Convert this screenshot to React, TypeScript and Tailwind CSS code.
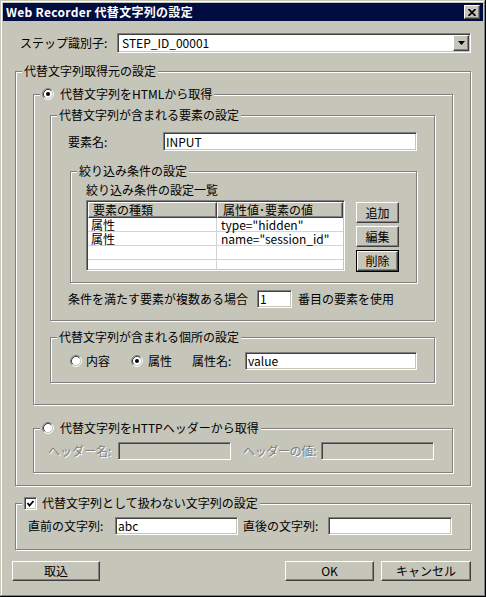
import React from 'react';

const SUNKEN =
  'border border-t-[#808080] border-l-[#808080] border-b-white border-r-white shadow-[inset_1px_1px_0_#404040,inset_-1px_-1px_0_#c6c5b9]';
const RAISED =
  'border border-t-white border-l-white border-b-[#404040] border-r-[#404040] shadow-[inset_-1px_-1px_0_#808080]';
const DISABLED = 'text-[#808080] [text-shadow:1px_1px_0_#fff]';

const Radio: React.FC<{ checked?: boolean }> = ({ checked }) => (
  <svg width="12" height="12" viewBox="0 0 12 12" className="shrink-0">
    <circle cx="6" cy="6" r="4.5" fill="#fff" />
    <path d="M9.89 2.11 A5.5 5.5 0 0 0 2.11 9.89" fill="none" stroke="#808080" />
    <path d="M2.11 9.89 A5.5 5.5 0 0 0 9.89 2.11" fill="none" stroke="#fff" />
    <path d="M9.18 2.82 A4.5 4.5 0 0 0 2.82 9.18" fill="none" stroke="#404040" />
    <path d="M2.82 9.18 A4.5 4.5 0 0 0 9.18 2.82" fill="none" stroke="#c6c5b9" />
    {checked && <circle cx="6" cy="6" r="2" fill="#000" />}
  </svg>
);

const Check: React.FC = () => (
  <div className={`w-[13px] h-[13px] bg-white shrink-0 flex items-center justify-center ${SUNKEN}`}>
    <svg width="9" height="9" viewBox="0 0 9 9">
      <polyline points="1.5,4 3.5,6.5 7.5,2" fill="none" stroke="#000" strokeWidth="1.8" />
    </svg>
  </div>
);

const Group: React.FC<{ label: React.ReactNode; className?: string; body?: string; children?: React.ReactNode }> = ({
  label,
  className = '',
  body = '',
  children,
}) => (
  <div className={`border border-[#808080] shadow-[inset_1px_1px_0_#fff,1px_1px_0_#fff] ${className}`}>
    <div className="-mt-[8px] ml-[6px] w-fit bg-[#c6c5b9] px-[2px] h-[14px] leading-[14px] flex items-center">
      {label}
    </div>
    <div className={body}>{children}</div>
  </div>
);

const Input: React.FC<{ value?: string; className?: string; disabled?: boolean }> = ({ value = '', className = '', disabled }) => (
  <div
    className={`h-[18px] p-[1px] pl-[2px] flex items-center leading-[14px] ${disabled ? 'bg-[#c6c5b9]' : 'bg-white'} ${SUNKEN} ${className}`}
  >
    {value}
  </div>
);

const Button: React.FC<{ children: React.ReactNode; className?: string }> = ({ children, className = '' }) => (
  <div className={`h-[20px] bg-[#c6c5b9] flex items-center justify-center leading-[14px] ${RAISED} ${className}`}>
    {children}
  </div>
);

const rows = [
  ['属性', 'type="hidden"'],
  ['属性', 'name="session_id"'],
  ['', ''],
  ['', ''],
];

export default function App() {
  return (
    <div className="w-[486px] h-[597px] bg-[#c6c5b9] p-[3px] text-[12px] leading-[14px] text-black [font-family:'Noto_Sans_CJK_JP','Noto_Sans',sans-serif] shadow-[inset_-1px_-1px_0_#000,inset_1px_1px_0_#c6c5b9,inset_-2px_-2px_0_#808080,inset_2px_2px_0_#fff]">
      {/* title bar */}
      <div className="h-[18px] bg-[#010c40] flex items-center justify-between pl-[3px] pr-[3px]">
        <span className="text-white font-bold tracking-[0.3px]">Web Recorder 代替文字列の設定</span>
        <div className={`w-[16px] h-[14px] bg-[#c6c5b9] flex items-center justify-center ${RAISED}`}>
          <svg width="8" height="7" viewBox="0 0 8 7">
            <path d="M0.5 0 L7.5 7 M7.5 0 L0.5 7" stroke="#000" strokeWidth="1.6" />
          </svg>
        </div>
      </div>

      <div className="px-[12px] pt-[12px]">
        {/* step id */}
        <div className="flex items-center h-[20px]">
          <span className="pl-[5px] w-[102px]">ステップ識別子:</span>
          <div className={`flex-1 h-[20px] bg-white p-[1px] flex items-center ${SUNKEN}`}>
            <span className="pl-[3px] flex-1">STEP_ID_00001</span>
            <div className={`w-[16px] h-[16px] bg-[#c6c5b9] flex items-center justify-center ${RAISED}`}>
              <svg width="7" height="4" viewBox="0 0 7 4">
                <path d="M0 0 H7 L3.5 4 Z" fill="#000" />
              </svg>
            </div>
          </div>
        </div>

        {/* source settings */}
        <Group label="代替文字列取得元の設定" className="mt-[18px]" body="px-[17px] pb-[12px]">
          <Group
            className="mt-[16px]"
            body="pl-[16px] pr-[17px] pb-[21px]"
            label={
              <span className="flex items-center gap-[6px]">
                <Radio checked />
                代替文字列をHTMLから取得
              </span>
            }
          >
            <Group label="代替文字列が含まれる要素の設定" className="mt-[14px]" body="px-[17px] pb-[12px]">
              <div className="mt-[10px] flex items-center h-[19px]">
                <span className="w-[95px]">要素名:</span>
                <Input value="INPUT" className="flex-1 h-[19px]" />
              </div>

              <Group label="絞り込み条件の設定" className="mt-[20px] ml-[2px]" body="pl-[15px] pr-[17px] pb-[10px]">
                <div className="mt-[5px]">絞り込み条件の設定一覧</div>
                <div className="mt-[3px] flex gap-[11px]">
                  <div className={`w-[259px] h-[71px] bg-white p-[1px] overflow-hidden ${SUNKEN}`}>
                    <div className="flex h-[16px]">
                      <div className={`w-[129px] bg-[#c6c5b9] pl-[4px] flex items-center ${RAISED}`}>要素の種類</div>
                      <div className={`flex-1 bg-[#c6c5b9] pl-[5px] flex items-center ${RAISED}`}>属性値･要素の値</div>
                    </div>
                    {rows.map((r, i) => (
                      <div key={i} className="flex h-[14px] leading-[14px] shadow-[inset_0_-1px_0_#d4d4d4]">
                        <div className="w-[129px] pl-[3px] shadow-[inset_-1px_0_0_#d4d4d4]">{r[0]}</div>
                        <div className="flex-1 pl-[4px]">{r[1]}</div>
                      </div>
                    ))}
                  </div>
                  <div className="w-[43px] pt-[2px] flex flex-col gap-[3px]">
                    <Button className="h-[21px]">追加</Button>
                    <Button className="h-[21px]">編集</Button>
                    <div className="h-[22px] border border-black">
                      <Button className="h-full">削除</Button>
                    </div>
                  </div>
                </div>
              </Group>

              <div className="mt-[7px] flex items-center h-[18px]">
                <span>条件を満たす要素が複数ある場合</span>
                <Input value="1" className="w-[35px] ml-[9px]" />
                <span className="ml-[6px]">番目の要素を使用</span>
              </div>
            </Group>

            <Group label="代替文字列が含まれる個所の設定" className="mt-[16px]" body="pl-[19px] pr-[17px] pb-[12px]">
              <div className="mt-[8px] flex items-center h-[18px]">
                <Radio />
                <span className="ml-[4px] w-[45px]">内容</span>
                <Radio checked />
                <span className="ml-[5px] w-[44px]">属性</span>
                <span className="w-[53px]">属性名:</span>
                <Input value="value" className="flex-1" />
              </div>
            </Group>
          </Group>

          <Group
            className="mt-[23px]"
            body="pl-[14px] pr-[18px] pb-[12px]"
            label={
              <span className="flex items-center gap-[6px]">
                <Radio />
                代替文字列をHTTPヘッダーから取得
              </span>
            }
          >
            <div className="mt-[7px] flex items-center h-[18px]">
              <span className={`w-[70px] ${DISABLED}`}>ヘッダー名:</span>
              <Input disabled className="w-[113px]" />
              <span className={`ml-[12px] w-[78px] tracking-[-0.3px] ${DISABLED}`}>ヘッダーの値:</span>
              <Input disabled className="flex-1" />
            </div>
          </Group>
        </Group>

        {/* ignore strings */}
        <Group
          className="mt-[17px]"
          body="pl-[12px] pr-[18px] pb-[14px]"
          label={
            <span className="flex items-center gap-[5px]">
              <Check />
              代替文字列として扱わない文字列の設定
            </span>
          }
        >
          <div className="mt-[7px] flex items-center h-[18px]">
            <span className="w-[87px]">直前の文字列:</span>
            <Input value="abc" className="w-[123px]" />
            <span className="ml-[5px] w-[85px]">直後の文字列:</span>
            <Input className="flex-1" />
          </div>
        </Group>

        {/* bottom buttons */}
        <div className="mt-[11px] -ml-[3px] flex">
          <Button className="w-[88px]">取込</Button>
          <div className="flex-1" />
          <Button className="w-[89px]">OK</Button>
          <Button className="w-[90px] ml-[7px]">キャンセル</Button>
        </div>
      </div>
    </div>
  );
}
